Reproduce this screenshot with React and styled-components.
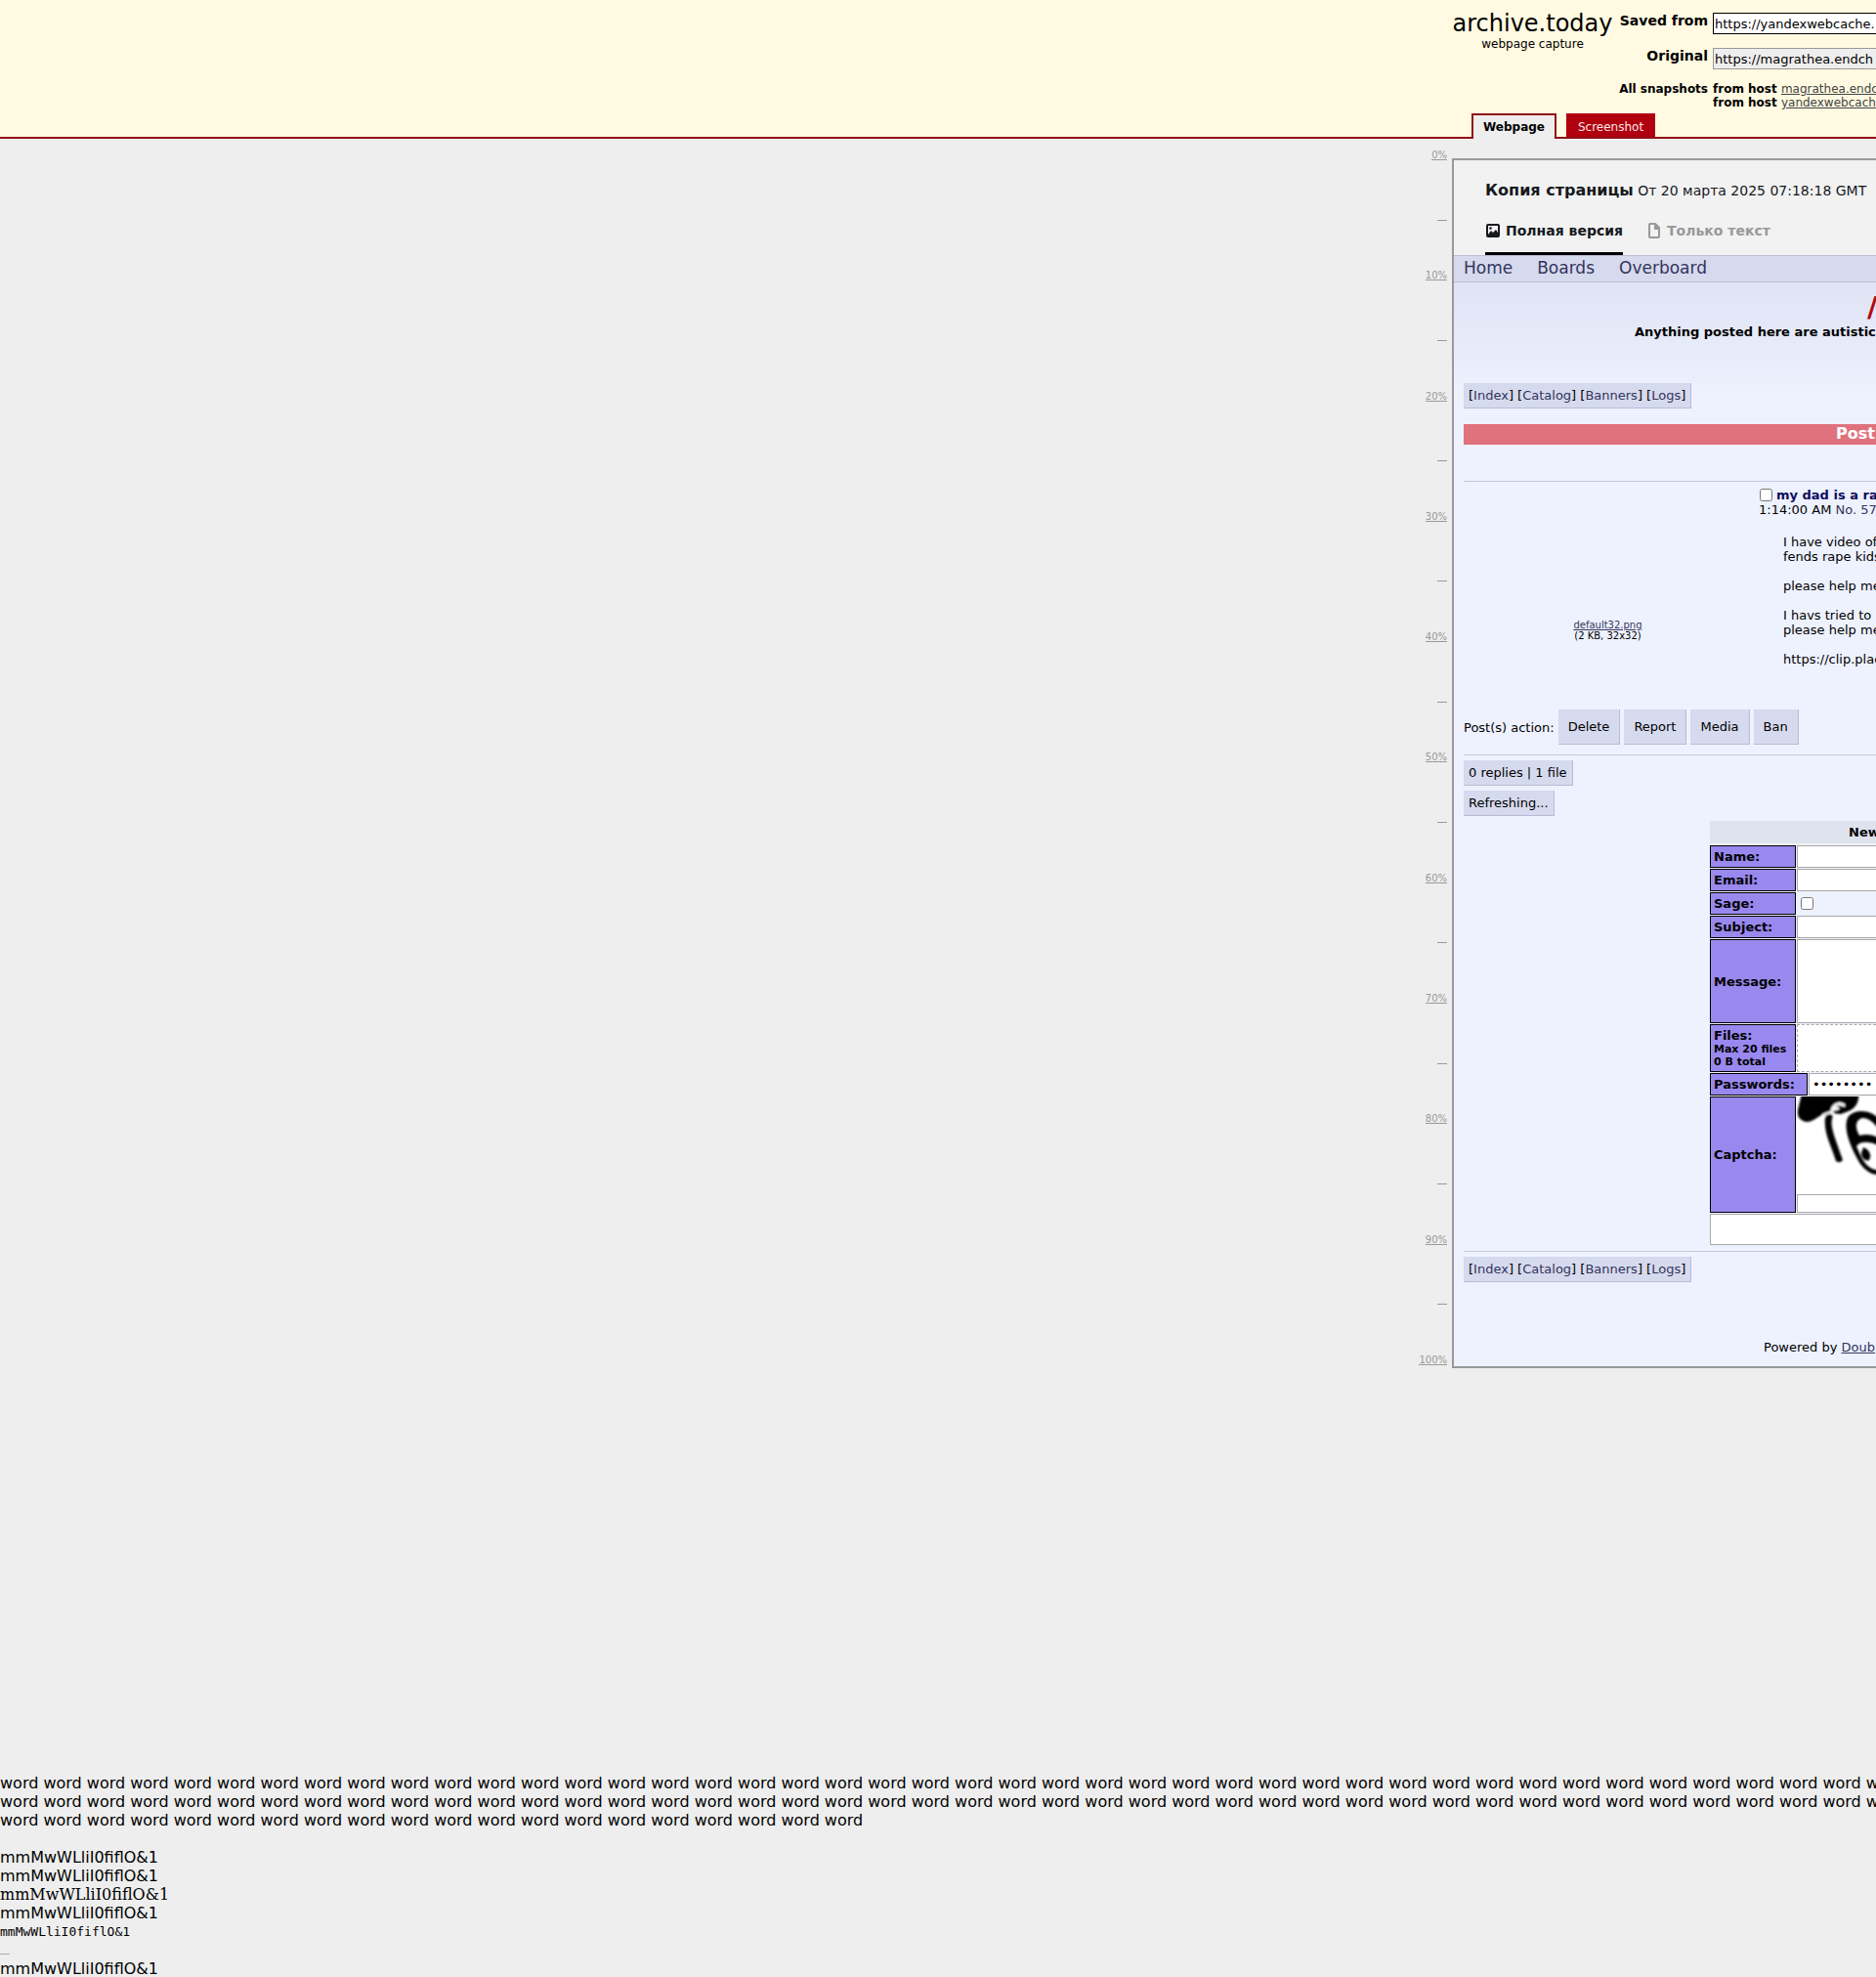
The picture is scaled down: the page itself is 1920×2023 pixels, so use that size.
import React from 'react';
import styled, { createGlobalStyle, css } from 'styled-components';

const GlobalStyle = createGlobalStyle`
  * {
    box-sizing: border-box;
  }

  body {
    margin: 0;
    background: #eee;
    color: #000;
    font-family: 'DejaVu Sans', sans-serif;
    font-size: 13px;
    line-height: 15px;
    overflow-x: hidden;
  }

  input, textarea, button {
    font-family: inherit;
    font-size: inherit;
    border-radius: 0;
    margin: 0;
  }
`;

const Page = styled.div`
  overflow: hidden;
  white-space: nowrap;
`;

/* archive header */

const Header = styled.header`
  display: grid;
  grid-template-columns: 1fr 434px;
  background: #fffae1;
  border-bottom: 2px solid #901116;
`;

const HeaderContent = styled.div`
  grid-column: 2;
  min-width: 0;
  padding-top: 10px;
`;

const HeaderTop = styled.div`
  display: flex;
`;

const Logo = styled.div`
  flex: 0 0 165px;
  font-size: 12px;
  line-height: 14px;
  text-align: center;
`;

const LogoName = styled.div`
  font-size: 24px;
  line-height: 28px;
`;

const Fields = styled.div`
  display: grid;
  flex: 1;
  min-width: 0;
  grid-template-columns: 97px 1fr;
  grid-template-rows: 36px 35px 28px;
  column-gap: 5px;
  padding-top: 3px;
`;

const FieldLabel = styled.label`
  font-size: 14px;
  font-weight: bold;
  line-height: 16px;
  text-align: right;
`;

const UrlInput = styled.input`
  width: 100%;
  height: 22px;
  padding: 0 1px;
  border: 1px solid ${(props) => (props.readOnly ? '#999' : '#000')};
  border-right: 0;
  background: ${(props) => (props.readOnly ? '#eee' : '#fff')};
  color: #000;
`;

const Snapshots = styled.div`
  font-size: 12px;
  font-weight: bold;
  line-height: 14px;
  text-align: ${(props) => (props.$right ? 'right' : 'left')};
`;

const HostLink = styled.a`
  color: #444;
  font-weight: normal;
`;

const Tabs = styled.nav`
  display: flex;
  gap: 10px;
  margin: 4px 0 -2px 20px;
`;

const Tab = styled.a`
  height: 24px;
  padding: 7px 12px 0;
  background: #b0000f;
  color: #fde6e6;
  font-size: 12px;
  line-height: 14px;
  text-decoration: none;

  ${(props) => props.$active && css`
    height: 26px;
    padding: 5px 10px 0;
    border: 2px solid #901116;
    border-bottom: 0;
    background: #eee;
    color: #000;
    font-weight: bold;
  `}
`;

/* capture with its ruler */

const Capture = styled.main`
  display: grid;
  grid-template-columns: 1fr 434px;
  padding-top: 20px;
`;

const Ruler = styled.div`
  display: flex;
  flex-direction: column;
  align-items: flex-end;
  justify-content: space-between;
  margin: -12px 5px 3px 0;
`;

const Mark = styled.a`
  height: 14px;
  min-width: 10px;
  padding-top: 3px;
  border-bottom: 1px solid #999;
  color: #999;
  font-size: 10px;
  line-height: 11px;
  text-decoration: none;
`;

const Sheet = styled.div`
  min-width: 0;
  border: 2px solid #999;
  border-right: 0;
  background: #edf2fe;
`;

const CopyHead = styled.div`
  padding: 21px 0 0 32px;
  background: #f2f2f2;
  color: #16191d;
  font-size: 14px;
  line-height: 19px;
`;

const CopyTitle = styled.b`
  font-size: 16px;
`;

const Versions = styled.div`
  display: flex;
  gap: 25px;
  margin-top: 23px;
`;

const Version = styled.a`
  display: flex;
  gap: 5px;
  padding-bottom: 14px;
  border-bottom: 3px solid ${(props) => (props.$active ? '#000' : 'transparent')};
  color: ${(props) => (props.$active ? '#16191d' : '#999')};
  font-weight: bold;
  line-height: 16px;
  text-decoration: none;
`;

const BoardNav = styled.nav`
  display: flex;
  gap: 25px;
  padding: 2px 0 4px 10px;
  border: 1px solid #b9bdd6;
  border-width: 1px 0;
  background: #d6daee;
  font-size: 17px;
  line-height: 20px;
`;

const BoardLink = styled.a`
  color: #34345c;
  text-decoration: ${(props) => (props.$underline ? 'underline' : 'none')};
`;

const Board = styled.div`
  padding: 8px 0 12px 10px;
  background: linear-gradient(#dfe3f5, #edf2fe 120px);
`;

const BoardName = styled.h1`
  margin: 0 0 1px 413px;
  color: #af0a0f;
  font-size: 29px;
  line-height: 34px;
`;

const Tagline = styled.div`
  margin: 0 0 45px 175px;
  font-weight: bold;
`;

const Box = styled.div`
  width: max-content;
  height: 26px;
  padding: 5px;
  border: 1px solid #b7bbd7;
  border-width: 0 1px 1px 0;
  background: #d6daee;
  margin-bottom: 5px;
`;

const ModeBar = styled.div`
  margin: 16px 0 37px;
  padding: 0 0 2px 381px;
  background: #e0727e;
  color: #fff;
  font-size: 16px;
  font-weight: bold;
  line-height: 19px;
`;

const Rule = styled.hr`
  margin: 0 0 5px;
  border: 0;
  border-top: 1px solid #c5c9dd;
`;

const Post = styled.article`
  display: grid;
  grid-template-columns: 295px 1fr;
  column-gap: 7px;
  align-items: end;
`;

const FileInfo = styled.div`
  padding-bottom: 26px;
  font-size: 10px;
  line-height: 11px;
  text-align: center;
`;

const PostBody = styled.div`
  padding-top: 1px;
`;

const PostHead = styled.div`
  display: flex;
  align-items: center;
  gap: 4px;
  height: 15px;
`;

const Checkbox = styled.input`
  width: 13px;
  height: 13px;
  margin: 0 0 0 1px;
`;

const Subject = styled.label`
  color: #0f0c5d;
  font-weight: bold;
`;

const Message = styled.p`
  margin: 18px 0 0 25px;
  white-space: pre;
`;

const Actions = styled.div`
  display: flex;
  align-items: center;
  gap: 4px;
  margin: 44px 0 10px;
`;

const Action = styled.button`
  height: 36px;
  padding: 0 10px;
  border: 1px solid #b7bbd7;
  border-width: 0 1px 1px 0;
  background: #d6daee;
  color: #000;
`;

const Form = styled.form`
  display: flex;
  flex-direction: column;
  gap: 1px;
  margin: 0 0 6px 252px;
`;

const FormTitle = styled.div`
  height: 23px;
  margin-bottom: 1px;
  padding: 4px 0 0 142px;
  background: #dee3ee;
  font-weight: bold;
`;

const FormRow = styled.div`
  display: flex;
  gap: 1px;
  height: ${(props) => props.$height || 23}px;
`;

const FormLabel = styled.label`
  display: flex;
  flex-direction: column;
  flex: 0 0 ${(props) => (props.$wide ? 100 : 88)}px;
  justify-content: center;
  padding-left: 3px;
  border: 1px solid #000;
  background: #98e;
  font-weight: bold;

  small {
    font-size: 11px;
    line-height: 13px;
  }
`;

const field = css`
  display: block;
  flex: 1;
  min-width: 0;
  padding: 0 3px;
  border: 1px solid #a9a9a9;
  border-right: 0;
  background: #fff;
  resize: none;
`;

const Input = styled.input`
  ${field}
`;

const TextArea = styled.textarea`
  ${field}
`;

const DropZone = styled.button`
  ${field}
  border-style: dashed;
`;

const CheckCell = styled.div`
  display: flex;
  align-items: center;
  padding-left: 3px;
`;

const CaptchaCell = styled.div`
  display: flex;
  flex: 1;
  flex-direction: column;
  min-width: 0;
  background: #fff;

  svg {
    display: block;
    flex: 0 0 100px;
  }
`;

const Submit = styled.button`
  height: 32px;
  border: 1px solid #a9a9a9;
  border-right: 0;
  background: #fff;
`;

const Powered = styled.footer`
  margin: 59px 0 0 307px;
`;

/* font samples under the capture */

const Samples = styled.div`
  margin-top: 415px;
  font-size: 16px;
  line-height: 19px;
`;

const Words = styled.div`
  margin-bottom: 19px;
`;

const Sample = styled.div`
  height: 19px;
  font-family: ${(props) => props.$family || 'inherit'};
  font-size: ${(props) => props.$size || 16}px;
`;

const Dash = styled.div`
  width: 10px;
  height: 14px;
  margin-bottom: 5px;
  border-bottom: 1px solid #aaa;
`;

const marks = Array.from({ length: 21 }, (_, i) => i * 5);
const wordLines = [
  `${'word '.repeat(43)}w`,
  `${'word '.repeat(43)}w`,
  'word '.repeat(20),
];
const boardLinks = ['Index', 'Catalog', 'Banners', 'Logs'];
const sampleText = 'mmMwWLliI0fiflO&1';

const message = [
  'I have video of',
  'fends rape kids',
  '',
  'please help me',
  '',
  'I havs tried to',
  'please help me',
  '',
  'https://clip.plac',
].join('\n');

function PictureIcon() {
  return (
    <svg width="16" height="16" viewBox="0 0 16 16" aria-hidden="true">
      <path
        fill="currentColor"
        fillRule="evenodd"
        d="M3 1h10a2 2 0 0 1 2 2v10a2 2 0 0 1-2 2H3a2 2 0 0 1-2-2V3a2 2 0 0 1 2-2zm0 2v9l3-4 2 2 3-3 2 3V3z"
      />
      <circle cx="5.5" cy="5.5" r="1.3" fill="currentColor" />
    </svg>
  );
}

function FileIcon() {
  return (
    <svg width="15" height="16" viewBox="0 0 15 16" aria-hidden="true">
      <path
        fill="none"
        stroke="currentColor"
        strokeWidth="2"
        strokeLinejoin="round"
        d="M3 1h5l4 4v9a1 1 0 0 1-1 1H3a1 1 0 0 1-1-1V2a1 1 0 0 1 1-1z"
      />
      <path fill="currentColor" d="M7 1h2l4 4v2H7z" />
    </svg>
  );
}

function CaptchaPicture() {
  return (
    <svg width="81" height="100" viewBox="0 0 81 100" role="img" aria-label="Captcha">
      <filter id="soft">
        <feGaussianBlur stdDeviation="0.9" />
      </filter>
      <g filter="url(#soft)">
        <path d="M5-3H63C64 6 60 12 53 15L45 18 37 17 27 18C21 21 16 26 10 26 3 25 0 20 1 14Z" />
        <path
          fill="none"
          stroke="#fff"
          strokeWidth="3"
          strokeLinecap="round"
          d="M28 19L36 16C36 10 42 5 48 9M38 13L42 12"
        />
        <path d="M29 20C34 16 38 18 36 23C34 31 39 42 47 65Q44 69 40 66C35 49 27 38 29 20Z" />
        <path
          fillRule="evenodd"
          d="M85 24C77 14 61 12 53 20C46 31 55 51 62 64C67 74 76 81 85 80V75C77 76 70 71 65 60L61 51C64 46 74 45 85 51V43C78 39 71 38 64 40C59 31 60 24 67 22C75 22 79 28 85 34Z"
        />
        <path d="M68 52C74 54 77 60 74 65C71 67 66 63 66 58Z" />
      </g>
    </svg>
  );
}

function BoardLinks() {
  return (
    <Box as="nav">
      {boardLinks.map((name, i) => (
        <React.Fragment key={name}>
          {i > 0 && ' '}
          [<BoardLink href="#">{name}</BoardLink>]
        </React.Fragment>
      ))}
    </Box>
  );
}

function ArchiveHeader() {
  return (
    <Header>
      <HeaderContent>
        <HeaderTop>
          <Logo>
            <LogoName>archive.today</LogoName>
            webpage capture
          </Logo>
          <Fields>
            <FieldLabel htmlFor="saved">Saved from</FieldLabel>
            <UrlInput id="saved" defaultValue="https://yandexwebcache." />
            <FieldLabel htmlFor="original">Original</FieldLabel>
            <UrlInput id="original" readOnly value="https://magrathea.endch" />
            <Snapshots $right>All snapshots</Snapshots>
            <Snapshots>
              <div>from host <HostLink href="#">magrathea.endc</HostLink></div>
              <div>from host <HostLink href="#">yandexwebcach</HostLink></div>
            </Snapshots>
          </Fields>
        </HeaderTop>
        <Tabs>
          <Tab href="#" $active>Webpage</Tab>
          <Tab href="#">Screenshot</Tab>
        </Tabs>
      </HeaderContent>
    </Header>
  );
}

function PostForm() {
  return (
    <Form>
      <FormTitle>New</FormTitle>
      <FormRow>
        <FormLabel htmlFor="name">Name:</FormLabel>
        <Input id="name" />
      </FormRow>
      <FormRow>
        <FormLabel htmlFor="email">Email:</FormLabel>
        <Input id="email" />
      </FormRow>
      <FormRow>
        <FormLabel htmlFor="sage">Sage:</FormLabel>
        <CheckCell>
          <Checkbox id="sage" type="checkbox" />
        </CheckCell>
      </FormRow>
      <FormRow>
        <FormLabel htmlFor="subject">Subject:</FormLabel>
        <Input id="subject" />
      </FormRow>
      <FormRow $height={86}>
        <FormLabel htmlFor="message">Message:</FormLabel>
        <TextArea id="message" />
      </FormRow>
      <FormRow $height={49}>
        <FormLabel htmlFor="files">
          Files:
          <small>Max 20 files</small>
          <small>0 B total</small>
        </FormLabel>
        <DropZone id="files" type="button" />
      </FormRow>
      <FormRow>
        <FormLabel htmlFor="password" $wide>Passwords:</FormLabel>
        <Input id="password" type="password" defaultValue="password1234" />
      </FormRow>
      <FormRow $height={119}>
        <FormLabel htmlFor="captcha">Captcha:</FormLabel>
        <CaptchaCell>
          <CaptchaPicture />
          <Input id="captcha" />
        </CaptchaCell>
      </FormRow>
      <Submit type="button" aria-label="Submit" />
    </Form>
  );
}

function App() {
  return (
    <Page>
      <GlobalStyle />
      <ArchiveHeader />
      <Capture>
        <Ruler>
          {marks.map((mark) => (
            <Mark key={mark} href="#">{mark % 10 === 0 && `${mark}%`}</Mark>
          ))}
        </Ruler>
        <Sheet>
          <CopyHead>
            <CopyTitle>Копия страницы</CopyTitle> От 20 марта 2025 07:18:18 GMT
            <Versions>
              <Version href="#" $active><PictureIcon />Полная версия</Version>
              <Version href="#"><FileIcon />Только текст</Version>
            </Versions>
          </CopyHead>
          <BoardNav>
            <BoardLink href="#">Home</BoardLink>
            <BoardLink href="#">Boards</BoardLink>
            <BoardLink href="#">Overboard</BoardLink>
          </BoardNav>
          <Board>
            <BoardName>/</BoardName>
            <Tagline>Anything posted here are autistic</Tagline>
            <BoardLinks />
            <ModeBar>Post</ModeBar>
            <Rule />
            <Post>
              <FileInfo>
                <BoardLink href="#" $underline>default32.png</BoardLink>
                <div>(2 KB, 32x32)</div>
              </FileInfo>
              <PostBody>
                <PostHead>
                  <Checkbox id="post" type="checkbox" />
                  <Subject htmlFor="post">my dad is a ra</Subject>
                </PostHead>
                <div>1:14:00 AM <BoardLink href="#">No. 57</BoardLink></div>
                <Message>{message}</Message>
              </PostBody>
            </Post>
            <Actions>
              Post(s) action:
              <Action>Delete</Action>
              <Action>Report</Action>
              <Action>Media</Action>
              <Action>Ban</Action>
            </Actions>
            <Rule />
            <Box>0 replies | 1 file</Box>
            <Box>Refreshing...</Box>
            <PostForm />
            <Rule />
            <BoardLinks />
            <Powered>
              Powered by <BoardLink href="#" $underline>Doub</BoardLink>
            </Powered>
          </Board>
        </Sheet>
      </Capture>
      <Samples>
        <Words>
          {wordLines.map((line, i) => (
            <div key={i}>{line}</div>
          ))}
        </Words>
        <Sample>{sampleText}</Sample>
        <Sample>{sampleText}</Sample>
        <Sample $family="'DejaVu Serif', serif">{sampleText}</Sample>
        <Sample>{sampleText}</Sample>
        <Sample $family="'DejaVu Sans Mono', monospace" $size={13}>{sampleText}</Sample>
        <Dash />
        <Sample>{sampleText}</Sample>
      </Samples>
    </Page>
  );
}

export default App;
